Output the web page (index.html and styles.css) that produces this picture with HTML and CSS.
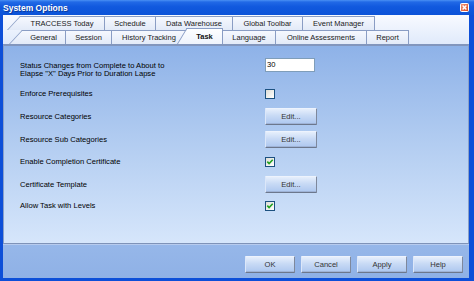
FILE: index.html
```html
<!DOCTYPE html>
<html>
<head>
<meta charset="utf-8">
<link rel="stylesheet" href="styles.css">
</head>
<body>
<div class="window">
  <div class="titlebar">
    <span class="title">System Options</span>
    <span class="close">
      <svg width="9" height="9" viewBox="0 0 9 9">
        <defs>
          <linearGradient id="cg" x1="0" y1="0" x2="1" y2="1">
            <stop offset="0" stop-color="#f39a7c"/>
            <stop offset="1" stop-color="#d9451c"/>
          </linearGradient>
        </defs>
        <rect x="0.5" y="0.5" width="8" height="8" rx="1" fill="url(#cg)" stroke="#ffffff" stroke-width="1"/>
        <path d="M2.6 2.6 L6.4 6.4 M6.4 2.6 L2.6 6.4" stroke="#ffffff" stroke-width="1.4"/>
      </svg>
    </span>
  </div>
  <div class="body">
    <div class="tabstrip">
      <div class="tabrow row1">
        <div class="tab slant w85">TRACCESS Today</div>
        <div class="tab w51">Schedule</div>
        <div class="tab w77">Data Warehouse</div>
        <div class="tab w70">Global Toolbar</div>
        <div class="tab w72">Event Manager</div>
      </div>
      <div class="tabrow row2">
        <div class="tab slant w44">General</div>
        <div class="tab w46">Session</div>
        <div class="tab w75">History Tracking</div>
        <div class="tab selected w36">Task</div>
        <div class="tab w53">Language</div>
        <div class="tab w91">Online Assessments</div>
        <div class="tab w42">Report</div>
      </div>
    </div>
    <div class="panel">
      <div class="form">
        <div class="label two">Status Changes from Complete to About to<br>Elapse "X" Days Prior to Duration Lapse</div>
        <div class="ctl top"><div class="textbox">30</div></div>

        <div class="label">Enforce Prerequisites</div>
        <div class="ctl"><span class="check"></span></div>

        <div class="label">Resource Categories</div>
        <div class="ctl"><button class="btn edit">Edit...</button></div>

        <div class="label">Resource Sub Categories</div>
        <div class="ctl"><button class="btn edit">Edit...</button></div>

        <div class="label">Enable Completion Certificate</div>
        <div class="ctl"><span class="check on"><svg width="8" height="8" viewBox="0 0 8 8"><path d="M1.3 3.6 L3.1 5.6 L6.7 1.8" fill="none" stroke="#21a121" stroke-width="1.6"/></svg></span></div>

        <div class="label">Certificate Template</div>
        <div class="ctl"><button class="btn edit">Edit...</button></div>

        <div class="label">Allow Task with Levels</div>
        <div class="ctl"><span class="check on"><svg width="8" height="8" viewBox="0 0 8 8"><path d="M1.3 3.6 L3.1 5.6 L6.7 1.8" fill="none" stroke="#21a121" stroke-width="1.6"/></svg></span></div>
      </div>
    </div>
    <div class="footer">
      <button class="btn foot">OK</button>
      <button class="btn foot">Cancel</button>
      <button class="btn foot">Apply</button>
      <button class="btn foot">Help</button>
    </div>
  </div>
</div>
</body>
</html>
```

FILE: styles.css
```css
html, body {
  margin: 0;
  padding: 0;
  width: 474px;
  height: 281px;
  overflow: hidden;
  background: #ffffff;
}

.window {
  width: 474px;
  height: 281px;
  box-sizing: border-box;
  background: #0d4fd8;
  display: flex;
  flex-direction: column;
  font-family: "Liberation Sans", Arial, sans-serif;
}

.titlebar {
  height: 15px;
  flex: none;
  display: flex;
  align-items: center;
  justify-content: space-between;
  background: linear-gradient(#4a90f4 0, #2169e6 2px, #1159de 45%, #0c53d8 100%);
  padding: 0 5px 0 3px;
}

.title {
  color: #ffffff;
  font-weight: bold;
  font-size: 8.5px;
  letter-spacing: 0;
  text-shadow: 1px 1px 0 #0a3a9c;
}

.close {
  width: 9px;
  height: 9px;
  display: block;
}

.close svg {
  display: block;
}

.body {
  flex: 1;
  margin: 0 5px 3px 3px;
  display: flex;
  flex-direction: column;
  background: #93b5e8;
}

.tabstrip {
  height: 29px;
  flex: none;
  box-sizing: border-box;
  padding-top: 1px;
  background: linear-gradient(#f8faff, #e0eafb);
  position: relative;
  z-index: 0;
}

.tabrow {
  height: 14px;
  display: flex;
  align-items: flex-end;
}

.row1 {
  padding-left: 17px;
}

.row2 {
  padding-left: 19px;
}

.tab {
  box-sizing: border-box;
  height: 14px;
  border-top: 1px solid #8a9dc4;
  border-right: 1px solid #8a9dc4;
  background: linear-gradient(#f6f8fe, #e2eaf8);
  display: flex;
  align-items: center;
  justify-content: center;
  position: relative;
  z-index: 1;
  font-size: 7.5px;
  color: #1a1a1a;
  white-space: nowrap;
  flex: none;
}

.tab.slant::before {
  content: "";
  position: absolute;
  z-index: -1;
  top: -1px;
  left: -13px;
  width: 26px;
  height: 14px;
  box-sizing: border-box;
  border-left: 1px solid #8a9dc4;
  border-top: 1px solid #8a9dc4;
  background: inherit;
  transform: skewX(-43deg);
  transform-origin: bottom left;
}

.tab.selected {
  height: 16px;
  font-weight: bold;
  background: linear-gradient(#fdfeff, #eef3fc);
  color: #111111;
  z-index: 2;
}

.tab.selected::before {
  content: "";
  position: absolute;
  z-index: -1;
  top: -1px;
  left: -10px;
  width: 24px;
  height: 16px;
  box-sizing: border-box;
  border-left: 1px solid #8a9dc4;
  border-top: 1px solid #8a9dc4;
  background: inherit;
  transform: skewX(-31deg);
  transform-origin: bottom left;
}

.w36 { width: 36px; }
.w42 { width: 42px; }
.w44 { width: 44px; }
.w46 { width: 46px; }
.w51 { width: 51px; }
.w53 { width: 53px; }
.w70 { width: 70px; }
.w72 { width: 72px; }
.w75 { width: 75px; }
.w77 { width: 77px; }
.w85 { width: 85px; }
.w91 { width: 91px; }

.panel {
  height: 200px;
  flex: none;
  box-sizing: border-box;
  border-top: 2px solid #8296bd;
  border-bottom: 1px solid #7f93b8;
  border-left: 1px solid #8aa0c8;
  border-right: 1px solid #8aa0c8;
  background: linear-gradient(#8eb2e8, #b3cdf1 50%, #d6e6fb);
  padding: 12px 0 0 16px;
}

.form {
  display: grid;
  grid-template-columns: 245px auto;
  grid-template-rows: 25px 22px 23px 23px 22px 23px 19px;
  font-size: 7.6px;
  color: #000000;
}

.label {
  align-self: center;
  line-height: 8px;
  white-space: nowrap;
}

.label.two {
  align-self: start;
  margin-top: 4px;
}

.ctl {
  display: flex;
  align-items: center;
}

.ctl.top {
  align-items: flex-start;
}

.textbox {
  box-sizing: border-box;
  width: 50px;
  height: 14px;
  border: 1px solid #7f9db9;
  background: #ffffff;
  padding-left: 1px;
  line-height: 12px;
  font-size: 7.6px;
}

.check {
  box-sizing: border-box;
  width: 10px;
  height: 10px;
  border: 1px solid #1c5180;
  background: linear-gradient(135deg, #dcdcd6, #f6f6f3 70%, #ffffff);
  display: flex;
  align-items: center;
  justify-content: center;
}

.check svg {
  display: block;
}

.btn {
  box-sizing: border-box;
  height: 17px;
  margin: 0;
  padding: 0;
  border: 1px solid;
  border-color: #edf3fd #7e889c #6c778c #dce7f9;
  border-radius: 1px;
  background: linear-gradient(#e6effc, #c8daf5 45%, #adc7ef);
  box-shadow: inset 0 -1px 0 #9fb3d6;
  font-family: "Liberation Sans", Arial, sans-serif;
  font-size: 7.6px;
  color: #333333;
  text-align: center;
}

.btn.edit {
  width: 52px;
}

.footer {
  flex: 1;
  box-sizing: border-box;
  border-top: 1px solid #b7cbee;
  background: linear-gradient(#96b7e9, #8fb1e6);
  display: flex;
  justify-content: flex-end;
  align-items: flex-start;
  gap: 6px;
  padding: 11px 6px 0 0;
}

.btn.foot {
  width: 50px;
}
```
